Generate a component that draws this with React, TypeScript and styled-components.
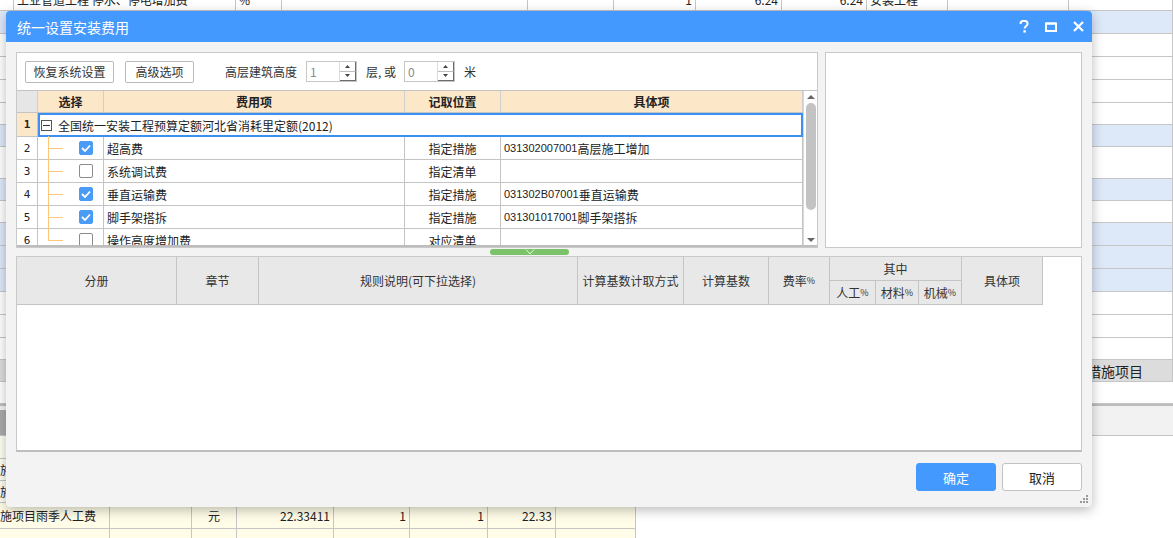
import React from "react";
import styled, { createGlobalStyle } from "styled-components";

const GlobalStyle = createGlobalStyle`
  html, body {
    margin: 0;
    padding: 0;
  }
  body {
    font-family: "Noto Sans CJK SC", "Microsoft YaHei", sans-serif;
    font-size: 12px;
    color: #333;
    background: #fff;
    overflow: hidden;
  }
  * {
    box-sizing: border-box;
  }
`;

const Desktop = styled.div`
  position: relative;
  width: 1173px;
  height: 538px;
  overflow: hidden;
  background: #fff;
`;

/* ---------- spreadsheet behind the dialog ---------- */

const Sheet = styled.div`
  display: flex;
  flex-direction: column;
  margin-top: -12px;
`;

const SheetRow = styled.div<{ $bg?: string; $h?: number; $w?: number }>`
  display: flex;
  flex-shrink: 0;
  width: ${(p) => (p.$w ? `${p.$w}px` : "100%")};
  height: ${(p) => p.$h ?? 23}px;
  background: ${(p) => p.$bg ?? "#fff"};
  border-bottom: 1px solid #c6c6c6;
`;

const SheetCell = styled.div<{
  $w: number;
  $align?: "left" | "right" | "center";
  $size?: number;
  $indent?: number;
}>`
  width: ${(p) => p.$w}px;
  flex-shrink: 0;
  display: flex;
  align-items: center;
  justify-content: ${(p) =>
    p.$align === "right" ? "flex-end" : p.$align === "center" ? "center" : "flex-start"};
  padding: 0 3px 0 ${(p) => p.$indent ?? 3}px;
  border-right: 1px solid #c6c6c6;
  font-size: ${(p) => p.$size ?? 12}px;
  color: #222;
  white-space: nowrap;
  overflow: hidden;
`;

const PaneBar = styled.div`
  height: 32px;
  flex-shrink: 0;
  display: flex;
  align-items: flex-end;
  background: #f2f2f2;
  border-top: 2px solid #bdbdbd;
  border-bottom: 1px solid #c6c6c6;
`;

const PaneTab = styled.div`
  width: 60px;
  height: 25px;
  background: linear-gradient(90deg, #a9a9a9, #cfcfcf);
`;

/* ---------- dialog ---------- */

const Dialog = styled.div`
  position: absolute;
  left: 6px;
  top: 11px;
  width: 1086px;
  height: 496px;
  background: #f3f3f3;
  border-radius: 4px;
  box-shadow: 0 3px 12px rgba(0, 0, 0, 0.28);
  display: flex;
  flex-direction: column;
  overflow: hidden;
`;

const TitleBar = styled.div`
  height: 31px;
  flex-shrink: 0;
  background: #4499ff;
  display: flex;
  align-items: center;
  padding: 0 8px 0 11px;
  color: #fff;
  font-size: 14px;
`;

const Title = styled.div`
  flex: 1;
`;

const TitleIcons = styled.div`
  display: flex;
  align-items: center;
  gap: 16px;
`;

const Body = styled.div`
  flex: 1;
  display: flex;
  flex-direction: column;
  padding: 10px 10px 0 10px;
`;

const TopRow = styled.div`
  display: flex;
  gap: 7px;
  height: 196px;
  flex-shrink: 0;
`;

const Panel = styled.div<{ $w?: number }>`
  ${(p) => (p.$w ? `width: ${p.$w}px;` : "flex: 1;")}
  background: #fff;
  border: 1px solid #c9c9c9;
  display: flex;
  flex-direction: column;
  overflow: hidden;
`;

const Toolbar = styled.div`
  height: 38px;
  flex-shrink: 0;
  display: flex;
  align-items: center;
  padding: 0 0 0 8px;
  border-bottom: 1px solid #c4c4c4;
  font-size: 12px;
`;

const ToolButton = styled.button<{ $w: number }>`
  width: ${(p) => p.$w}px;
  height: 22px;
  padding: 0;
  margin-right: 11px;
  background: #fff;
  border: 1px solid #b9b9b9;
  border-radius: 2px;
  font-family: inherit;
  font-size: 12px;
  color: #333;
  line-height: 1;
`;

const Label = styled.span<{ $ml?: number; $mr?: number }>`
  margin-left: ${(p) => p.$ml ?? 0}px;
  margin-right: ${(p) => p.$mr ?? 9}px;
  color: #333;
  white-space: nowrap;
`;

const Spin = styled.div`
  width: 51px;
  height: 21px;
  margin-right: 9px;
  display: flex;
  border: 1px solid #c6c6c6;
  background: #fff;
`;

const SpinValue = styled.div`
  flex: 1;
  padding-left: 3px;
  font-size: 12px;
  color: #8a8a8a;
  display: flex;
  align-items: center;
`;

const SpinArrows = styled.div`
  width: 17px;
  display: flex;
  flex-direction: column;
  border-left: 1px solid #dcdcdc;
`;

const SpinHalf = styled.div<{ $down?: boolean }>`
  flex: 1;
  display: flex;
  align-items: center;
  justify-content: center;
  border-bottom: 1px solid ${(p) => (p.$down ? "#6b6b6b" : "#bdbdbd")};
  border-right: 1px solid #6b6b6b;
`;

const TableWrap = styled.div`
  flex: 1;
  display: flex;
  overflow: hidden;
  border-bottom: 2px solid #bdbdbd;
`;

const Grid = styled.div`
  width: 786px;
  display: flex;
  flex-direction: column;
`;

const Row = styled.div<{ $h?: number }>`
  display: flex;
  flex-shrink: 0;
  height: ${(p) => p.$h ?? 23}px;
  border-bottom: 1px solid #c4c4c4;
`;

const HeadCell = styled.div<{ $w: number; $num?: boolean }>`
  width: ${(p) => p.$w}px;
  flex-shrink: 0;
  display: flex;
  align-items: center;
  justify-content: center;
  background: ${(p) => (p.$num ? "#e6e6e6" : "#fde7c9")};
  border-right: 1px solid #cfcfcf;
  font-weight: bold;
  font-size: 12px;
  color: #222;
`;

const NumCell = styled.div<{ $active?: boolean }>`
  width: 21px;
  flex-shrink: 0;
  display: flex;
  align-items: center;
  justify-content: center;
  background: ${(p) => (p.$active ? "#fde7c9" : "#fff")};
  border-right: 1px solid #c4c4c4;
  font-weight: ${(p) => (p.$active ? "bold" : "normal")};
  font-family: "DejaVu Sans Mono", monospace;
  font-size: 11px;
  color: #222;
`;

const GroupBox = styled.div`
  flex: 1;
  display: flex;
  align-items: center;
  border: 2px solid #3d8ff0;
  margin-bottom: -1px;
  padding-left: 1px;
  font-size: 12px;
  color: #222;
`;

const Toggle = styled.div`
  width: 11px;
  height: 11px;
  border: 1px solid #555;
  display: flex;
  align-items: center;
  justify-content: center;
  margin-right: 6px;
  &::after {
    content: "";
    width: 7px;
    height: 1px;
    background: #333;
  }
`;

const TreeCell = styled.div<{ $last?: boolean }>`
  position: relative;
  width: 66px;
  flex-shrink: 0;
  display: flex;
  align-items: center;
  padding-left: 41px;
  border-right: 1px solid #c4c4c4;
  &::before {
    content: "";
    position: absolute;
    left: 10px;
    top: -1px;
    height: ${(p) => (p.$last ? "12px" : "calc(100% + 1px)")};
    border-left: 1px solid #fdc77a;
  }
  &::after {
    content: "";
    position: absolute;
    left: 10px;
    top: 11px;
    width: 15px;
    border-top: 1px solid #fdc77a;
  }
`;

const Check = styled.div<{ $on?: boolean }>`
  width: 14px;
  height: 14px;
  border-radius: 2px;
  background: ${(p) => (p.$on ? "#4a9bf6" : "#fff")};
  border: 1px solid ${(p) => (p.$on ? "#4a9bf6" : "#8c8c8c")};
  display: flex;
  align-items: center;
  justify-content: center;
`;

const Cell = styled.div<{ $w: number; $center?: boolean }>`
  width: ${(p) => p.$w}px;
  flex-shrink: 0;
  display: flex;
  align-items: center;
  justify-content: ${(p) => (p.$center ? "center" : "flex-start")};
  padding-left: ${(p) => (p.$center ? 0 : 3)}px;
  border-right: 1px solid #c4c4c4;
  font-size: 12px;
  color: #222;
  white-space: nowrap;
`;

const Code = styled.span`
  font-family: "Liberation Sans", sans-serif;
  font-size: 11px;
`;

const ScrollBar = styled.div`
  width: 14px;
  border-left: 1px solid #d8d8d8;
  display: flex;
  flex-direction: column;
  align-items: center;
  padding-top: 4px;
`;

const Thumb = styled.div`
  width: 10px;
  height: 107px;
  margin-top: 4px;
  border-radius: 5px;
  background: #c3c3c3;
`;

const ScrollGap = styled.div`
  flex: 1;
`;

const Splitter = styled.div`
  height: 8px;
  flex-shrink: 0;
  display: flex;
  align-items: center;
  padding-left: 474px;
`;

const Handle = styled.div`
  width: 79px;
  height: 6px;
  border-radius: 3px;
  background: #7cc26a;
  display: flex;
  justify-content: center;
  align-items: flex-start;
`;

const LowerPanel = styled.div`
  height: 196px;
  flex-shrink: 0;
  background: #fff;
  border: 1px solid #c9c9c9;
  border-bottom: 2px solid #bdbdbd;
`;

const RuleHead = styled.div`
  display: grid;
  width: 1026px;
  grid-template-columns: 160px 82px 319px 106px 85px 61px 46px 43px 43px 81px;
  grid-template-rows: 23px 24px;
  background: #e8e8e8;
  border-bottom: 1px solid #c4c4c4;
`;

const RuleCell = styled.div<{ $col: string; $row: string }>`
  grid-column: ${(p) => p.$col};
  grid-row: ${(p) => p.$row};
  display: flex;
  align-items: center;
  justify-content: center;
  border-right: 1px solid #c4c4c4;
  font-size: 12px;
  color: #333;
  white-space: nowrap;
`;

const SubCell = styled(RuleCell)`
  border-top: 1px solid #c4c4c4;
`;

const Pct = styled.span`
  font-size: 9px;
`;

const Footer = styled.div`
  flex: 1;
  display: flex;
  justify-content: flex-end;
  align-items: flex-start;
  gap: 6px;
  padding-top: 11px;
`;

const FooterButton = styled.button<{ $primary?: boolean }>`
  width: 80px;
  height: 28px;
  border-radius: 3px;
  font-family: inherit;
  font-size: 13px;
  background: ${(p) => (p.$primary ? "#4499ff" : "#fff")};
  color: ${(p) => (p.$primary ? "#fff" : "#222")};
  border: 1px solid ${(p) => (p.$primary ? "#4499ff" : "#c2c2c2")};
`;

const Grip = styled.svg`
  position: absolute;
  right: 3px;
  bottom: 4px;
`;

/* ---------- data ---------- */

type SheetCellDef = { w: number; t?: string; a?: "left" | "right" | "center" };

const topCells: SheetCellDef[] = [
  { w: 14 },
  { w: 222, t: "工业管道工程 停水、停电增加费" },
  { w: 46, t: "%" },
  { w: 246 },
  { w: 86 },
  { w: 82, t: "1", a: "right" },
  { w: 86, t: "6.24", a: "right" },
  { w: 85, t: "6.24", a: "right" },
  { w: 81, t: "安装工程" },
  { w: 121 },
  { w: 104 },
];

const sheetRows: { bg?: string; h?: number; t?: string }[] = [
  { bg: "#dde8f9" },
  {},
  {},
  {},
  { h: 22 },
  { bg: "#dde8f9", h: 22 },
  { h: 32 },
  { bg: "#dde8f9", h: 22 },
  { h: 22 },
  { bg: "#dde8f9" },
  { bg: "#dde8f9" },
  { bg: "#dde8f9" },
  {},
  {},
  { h: 22 },
  { bg: "#dcdcdc", h: 22, t: "安装措施项目" },
];

const bottomCells: SheetCellDef[] = [
  { w: 110, t: "施项目雨季人工费" },
  { w: 82 },
  { w: 45, t: "元", a: "center" },
  { w: 97, t: "22.33411", a: "right" },
  { w: 76, t: "1", a: "right" },
  { w: 78, t: "1", a: "right" },
  { w: 68, t: "22.33", a: "right" },
  { w: 80 },
];

const items = [
  { n: 2, on: true, name: "超高费", pos: "指定措施", code: "031302007001", detail: "高层施工增加" },
  { n: 3, on: false, name: "系统调试费", pos: "指定清单", code: "", detail: "" },
  { n: 4, on: true, name: "垂直运输费", pos: "指定措施", code: "031302B07001", detail: "垂直运输费" },
  { n: 5, on: true, name: "脚手架搭拆", pos: "指定措施", code: "031301017001", detail: "脚手架搭拆" },
  { n: 6, on: false, name: "操作高度增加费", pos: "对应清单", code: "", detail: "" },
];

const Tick = () => (
  <svg width="10" height="8" viewBox="0 0 10 8">
    <path d="M1 4 L4 7 L9 1.5" stroke="#fff" strokeWidth="1.8" fill="none" />
  </svg>
);

const SpinBox = ({ value }: { value: string }) => (
  <Spin>
    <SpinValue>{value}</SpinValue>
    <SpinArrows>
      <SpinHalf>
        <svg width="5" height="3" viewBox="0 0 5 3">
          <path d="M0 3 L2.5 0 L5 3 Z" fill="#444" />
        </svg>
      </SpinHalf>
      <SpinHalf $down>
        <svg width="5" height="3" viewBox="0 0 5 3">
          <path d="M0 0 L2.5 3 L5 0 Z" fill="#444" />
        </svg>
      </SpinHalf>
    </SpinArrows>
  </Spin>
);

const App = () => {
  return (
    <Desktop>
      <GlobalStyle />
      <Sheet>
        <SheetRow>
          {topCells.map((c, i) => (
            <SheetCell key={i} $w={c.w} $align={c.a}>
              {c.t}
            </SheetCell>
          ))}
        </SheetRow>
        {sheetRows.map((r, i) => (
          <SheetRow key={i} $bg={r.bg} $h={r.h}>
            <SheetCell $w={1045} />
            <SheetCell $w={128} $size={14} $indent={14}>
              {r.t}
            </SheetCell>
          </SheetRow>
        ))}
        <SheetRow $h={22} />
        <PaneBar>
          <PaneTab />
        </PaneBar>
        <SheetRow $w={636} $bg="#fffef2" />
        <SheetRow $w={636} $bg="#fffef2" $h={22}>
          <SheetCell $w={110} $indent={0}>
            施项目
          </SheetCell>
        </SheetRow>
        <SheetRow $w={636} $bg="#fffef2" $h={22}>
          <SheetCell $w={110} $indent={0}>
            施项目
          </SheetCell>
        </SheetRow>
        <SheetRow $w={636} $bg="#fffde8" $h={26}>
          {bottomCells.map((c, i) => (
            <SheetCell key={i} $w={c.w} $align={c.a} $indent={i === 0 ? 0 : 3}>
              {c.t}
            </SheetCell>
          ))}
        </SheetRow>
        <SheetRow $w={636} $bg="#fffde8">
          {bottomCells.map((c, i) => (
            <SheetCell key={i} $w={c.w} />
          ))}
        </SheetRow>
      </Sheet>

      <Dialog>
        <TitleBar>
          <Title>统一设置安装费用</Title>
          <TitleIcons>
            <svg width="10" height="13" viewBox="0 0 10 13">
              <path
                d="M1.5 4 C1.5 1.5 3 0.8 5 0.8 C7 0.8 8.6 1.8 8.6 3.8 C8.6 6 5.6 6 5.6 8.6"
                stroke="#fff"
                strokeWidth="2"
                fill="none"
              />
              <rect x="4.4" y="10.2" width="2.4" height="2.4" fill="#fff" />
            </svg>
            <svg width="12" height="10" viewBox="0 0 12 10">
              <rect x="1" y="1.5" width="10" height="7.5" stroke="#fff" strokeWidth="2" fill="none" />
              <rect x="1" y="0.5" width="10" height="2" fill="#fff" />
            </svg>
            <svg width="11" height="11" viewBox="0 0 11 11">
              <path d="M1 1 L10 10 M10 1 L1 10" stroke="#fff" strokeWidth="2.2" />
            </svg>
          </TitleIcons>
        </TitleBar>

        <Body>
          <TopRow>
            <Panel>
              <Toolbar>
                <ToolButton $w={89}>恢复系统设置</ToolButton>
                <ToolButton $w={69}>高级选项</ToolButton>
                <Label $ml={20}>高层建筑高度</Label>
                <SpinBox value="1" />
                <Label $mr={8}>层, 或</Label>
                <SpinBox value="0" />
                <Label>米</Label>
              </Toolbar>
              <TableWrap>
                <Grid>
                  <Row $h={22}>
                    <HeadCell $w={21} $num />
                    <HeadCell $w={66}>选择</HeadCell>
                    <HeadCell $w={301}>费用项</HeadCell>
                    <HeadCell $w={96}>记取位置</HeadCell>
                    <HeadCell $w={302}>具体项</HeadCell>
                  </Row>
                  <Row $h={24}>
                    <NumCell $active>1</NumCell>
                    <GroupBox>
                      <Toggle />
                      全国统一安装工程预算定额河北省消耗里定额(2012)
                    </GroupBox>
                  </Row>
                  {items.map((it, i) => (
                    <Row key={it.n}>
                      <NumCell>{it.n}</NumCell>
                      <TreeCell $last={i === items.length - 1}>
                        <Check $on={it.on}>{it.on && <Tick />}</Check>
                      </TreeCell>
                      <Cell $w={301}>{it.name}</Cell>
                      <Cell $w={96} $center>
                        {it.pos}
                      </Cell>
                      <Cell $w={302}>
                        <Code>{it.code}</Code>
                        {it.detail}
                      </Cell>
                    </Row>
                  ))}
                </Grid>
                <ScrollBar>
                  <svg width="8" height="4" viewBox="0 0 8 4">
                    <path d="M0 4 L4 0 L8 4 Z" fill="#666" />
                  </svg>
                  <Thumb />
                  <ScrollGap />
                  <svg width="8" height="4" viewBox="0 0 8 4" style={{ marginBottom: 3 }}>
                    <path d="M0 0 L4 4 L8 0 Z" fill="#666" />
                  </svg>
                </ScrollBar>
              </TableWrap>
            </Panel>
            <Panel $w={257} />
          </TopRow>

          <Splitter>
            <Handle>
              <svg width="10" height="6" viewBox="0 0 10 6">
                <path d="M1 0.5 L5 5 L9 0.5" stroke="#e8f5e2" strokeWidth="1" fill="none" />
              </svg>
            </Handle>
          </Splitter>

          <LowerPanel>
            <RuleHead>
              <RuleCell $col="1" $row="1 / 3">分册</RuleCell>
              <RuleCell $col="2" $row="1 / 3">章节</RuleCell>
              <RuleCell $col="3" $row="1 / 3">规则说明(可下拉选择)</RuleCell>
              <RuleCell $col="4" $row="1 / 3">计算基数计取方式</RuleCell>
              <RuleCell $col="5" $row="1 / 3">计算基数</RuleCell>
              <RuleCell $col="6" $row="1 / 3">
                费率<Pct>%</Pct>
              </RuleCell>
              <RuleCell $col="7 / 10" $row="1">其中</RuleCell>
              <SubCell $col="7" $row="2">
                人工<Pct>%</Pct>
              </SubCell>
              <SubCell $col="8" $row="2">
                材料<Pct>%</Pct>
              </SubCell>
              <SubCell $col="9" $row="2">
                机械<Pct>%</Pct>
              </SubCell>
              <RuleCell $col="10" $row="1 / 3">具体项</RuleCell>
            </RuleHead>
          </LowerPanel>

          <Footer>
            <FooterButton $primary>确定</FooterButton>
            <FooterButton>取消</FooterButton>
          </Footer>
        </Body>

        <Grip width="9" height="8" viewBox="0 0 9 8">
          <rect x="6" y="0" width="2" height="2" fill="#9a9a9a" />
          <rect x="3" y="3" width="2" height="2" fill="#9a9a9a" />
          <rect x="6" y="3" width="2" height="2" fill="#9a9a9a" />
          <rect x="0" y="6" width="2" height="2" fill="#9a9a9a" />
          <rect x="3" y="6" width="2" height="2" fill="#9a9a9a" />
          <rect x="6" y="6" width="2" height="2" fill="#9a9a9a" />
        </Grip>
      </Dialog>
    </Desktop>
  );
};

export default App;
